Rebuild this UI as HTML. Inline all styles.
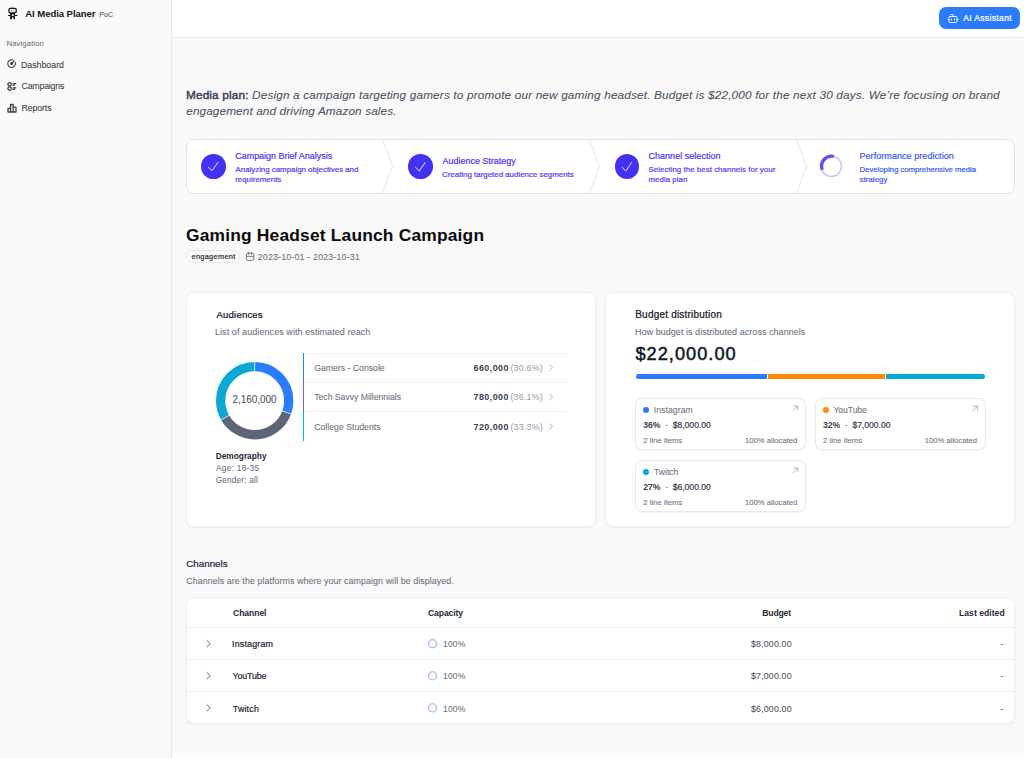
<!DOCTYPE html>
<html><head><meta charset="utf-8">
<style>
*{box-sizing:border-box;margin:0;padding:0}
html,body{width:1024px;height:758px;overflow:hidden;background:#fff;font-family:"Liberation Sans",sans-serif}
.a{position:absolute}
.t{position:absolute;white-space:nowrap;line-height:1}
svg{position:absolute;overflow:visible}
</style></head><body>
<!-- sidebar -->
<div class="a" style="left:0;top:0;width:171px;height:758px;background:#fafafa"></div>
<div class="a" style="left:171px;top:0;width:1px;height:758px;background:#e8e8ea"></div>
<!-- header -->
<div class="a" style="left:172px;top:0;width:852px;height:37px;background:#fff"></div>
<div class="a" style="left:172px;top:37px;width:852px;height:1px;background:#e8e9ec"></div>
<!-- main -->
<div class="a" style="left:172px;top:38px;width:852px;height:715px;background:#f9f9fa"></div>

<!-- logo robot -->
<svg style="left:0;top:0" width="24" height="24" viewBox="0 0 24 24">
  <path d="M11.9 8.3 L12.5 6.9 L13.1 8.3z" fill="#171717"/>
  <rect x="8.95" y="8.4" width="7.3" height="4.5" rx="1.3" fill="#ececec" stroke="#171717" stroke-width="1.25"/>
  <rect x="11.2" y="9.9" width="0.6" height="1.5" fill="#666"/>
  <rect x="13.6" y="9.9" width="0.6" height="1.5" fill="#888"/>
  <rect x="7.9" y="15.0" width="9.7" height="1.0" rx="0.5" fill="#171717"/>
  <path d="M10.1 13.1 H15.0 V19.2 H13.6 V17.6 H12.0 V19.2 H10.1z" fill="#171717"/>
  <circle cx="12.75" cy="15.15" r="1.0" fill="#fafafa"/>
</svg>
<!-- nav icons -->
<svg style="left:6.6px;top:59.4px" width="9.2" height="9.2" viewBox="0 0 24 24" fill="none" stroke="#404040" stroke-width="2.9" stroke-linecap="round" stroke-linejoin="round">
  <path d="M15.6 2.7a10 10 0 1 0 5.7 5.7"/><circle cx="12" cy="12" r="2.5" fill="#404040"/><path d="M13.4 10.6 19 5"/>
</svg>
<svg style="left:6.5px;top:81.5px" width="10" height="9" viewBox="0 0 10 9" fill="none" stroke="#404040" stroke-width="1.3">
  <circle cx="2.6" cy="2.3" r="1.7"/><circle cx="2.6" cy="6.6" r="1.7"/>
  <path d="M5.6 1.6h3.6M5.6 3.2h2.4M5.6 5.8h3.6M5.6 7.4h2.4"/>
</svg>
<svg style="left:6.5px;top:103px" width="10" height="10" viewBox="0 0 10 10" fill="none" stroke="#404040" stroke-width="1.3" stroke-linejoin="round">
  <path d="M1 9V5.5h2.6V9zM3.6 9V1.5h2.6V9zM6.2 9V4.2h2.8V9z"/>
</svg>

<!-- AI assistant button -->
<div class="a" style="left:939px;top:7px;width:81px;height:22px;border-radius:7px;background:#2b7bfe"></div>
<svg style="left:946.5px;top:12.5px" width="12" height="11" viewBox="0 0 24 22" fill="none" stroke="#fff" stroke-width="1.9" stroke-linecap="round" stroke-linejoin="round">
  <path d="M12 7V3H8"/><rect width="16" height="12" x="4" y="7" rx="2"/><path d="M2 13h2"/><path d="M20 13h2"/><path d="M15 12v2"/><path d="M9 12v2"/>
</svg>

<!-- steps box -->
<div class="a" style="left:186px;top:139px;width:829px;height:55px;border:1px solid #e3e4e8;border-radius:8px;background:#fff"></div>
<svg style="left:0;top:0" width="1024" height="758" viewBox="0 0 1024 758" fill="none" stroke="#e3e4e8" stroke-width="1">
  <path d="M382.4 139.5 L392.5 166.4 L382.4 193.5"/>
  <path d="M589.4 139.5 L599.5 166.4 L589.4 193.5"/>
  <path d="M796.4 139.5 L806.5 166.4 L796.4 193.5"/>
</svg>
<!-- step circles -->
<div class="a" style="left:201px;top:154px;width:24.6px;height:24.6px;border-radius:50%;background:#4432f4"></div>
<div class="a" style="left:408.2px;top:154.2px;width:24.6px;height:24.6px;border-radius:50%;background:#4432f4"></div>
<div class="a" style="left:614.8px;top:154.3px;width:24.6px;height:24.6px;border-radius:50%;background:#4432f4"></div>
<svg style="left:0;top:0" width="1024" height="758" fill="none" stroke="#f0eeff" stroke-width="0.95" stroke-linecap="round" stroke-linejoin="round">
  <path d="M208.3 167.1 L212.1 170.8 L218 162.2"/>
  <path d="M415.5 167.3 L419.3 171 L425.2 162.4"/>
  <path d="M622 167.3 L625.8 171 L631.7 162.4"/>
</svg>
<!-- spinner -->
<svg style="left:819.5px;top:154.6px" width="22.5" height="22.5" viewBox="0 0 22.5 22.5" fill="none">
  <circle cx="11.25" cy="11.25" r="10.2" stroke="#cbc3f8" stroke-width="1.6"/>
  <path d="M2.3 14.8 A10 10 0 0 1 13.8 1.4" stroke="#6a4cf5" stroke-width="3.4"/>
</svg>

<!-- badge -->
<div class="a" style="left:186.3px;top:249.8px;width:53.5px;height:12.8px;border:1px solid #e5e7eb;border-radius:7px;background:#fbfbfc"></div>
<!-- calendar -->
<svg style="left:0;top:0" width="300" height="300" fill="none" stroke="#6a7282" stroke-width="0.9" stroke-linecap="round">
  <rect x="246.4" y="253.3" width="7.4" height="7.1" rx="1.3"/>
  <path d="M246.4 256.4h7.4M248.6 252.2v2.2M251.6 252.2v2.2"/>
</svg>

<!-- cards -->
<div class="a" style="left:186px;top:292px;width:410px;height:235px;border:1px solid #eceef1;border-radius:8px;background:#fff;box-shadow:0 0.5px 1.5px rgba(0,0,0,0.05)"></div>
<div class="a" style="left:605px;top:292px;width:410px;height:235px;border:1px solid #eceef1;border-radius:8px;background:#fff;box-shadow:0 0.5px 1.5px rgba(0,0,0,0.05)"></div>

<!-- donut -->
<svg style="left:215.8px;top:361.8px" width="77.4" height="77.4" viewBox="0 0 100 100">
  <g transform="rotate(-90 50 50)" fill="none" stroke-width="12">
    <circle cx="50" cy="50" r="44" stroke="#2b7bfe" stroke-dasharray="84.6 1000" stroke-dashoffset="0"/>
    <circle cx="50" cy="50" r="44" stroke="#5e6577" stroke-dasharray="99.8 1000" stroke-dashoffset="-84.6"/>
    <circle cx="50" cy="50" r="44" stroke="#0aa8d2" stroke-dasharray="92.1 1000" stroke-dashoffset="-184.4"/>
  </g>
  <g stroke="#fff" stroke-width="0.9"><path d="M50.00 13.00 L50.00 -1.00"/><path d="M84.73 62.75 L97.88 67.58"/><path d="M17.92 68.43 L5.78 75.41"/></g>
</svg>
<!-- audience list -->
<div class="a" style="left:303px;top:352.5px;width:262.5px;height:1px;background:#f0f1f3"></div>
<div class="a" style="left:303px;top:381.8px;width:262.5px;height:1px;background:#f0f1f3"></div>
<div class="a" style="left:303px;top:411px;width:262.5px;height:1px;background:#f0f1f3"></div>
<div class="a" style="left:303px;top:352.5px;width:1.2px;height:29.3px;background:#2b7bfe"></div>
<div class="a" style="left:303px;top:381.8px;width:1.2px;height:29.3px;background:#7b5cf3"></div>
<div class="a" style="left:303px;top:411px;width:1.2px;height:29.8px;background:#10b2d8"></div>
<svg style="left:0;top:0" width="1024" height="758" fill="none" stroke="#99a1af" stroke-width="0.8" stroke-linecap="round" stroke-linejoin="round">
  <path d="M549.8 364.9 L552.6 367.6 L549.8 370.3"/>
  <path d="M549.8 394.3 L552.6 397 L549.8 399.7"/>
  <path d="M549.8 423.7 L552.6 426.4 L549.8 429.1"/>
</svg>

<!-- budget bar -->
<div class="a" style="left:635.6px;top:373.8px;width:131.6px;height:5.2px;border-radius:3px 0 0 3px;background:#2b7bfe"></div>
<div class="a" style="left:768.2px;top:373.8px;width:116.8px;height:5.2px;background:#ff8c00"></div>
<div class="a" style="left:886.1px;top:373.8px;width:98.9px;height:5.2px;border-radius:0 3px 3px 0;background:#08a9d4"></div>
<!-- mini cards -->
<div class="a" style="left:635px;top:398px;width:171px;height:52px;border:1px solid #e9eaee;border-radius:7px;background:#fff;box-shadow:0 0.5px 1px rgba(0,0,0,0.04)"></div>
<div class="a" style="left:815px;top:398px;width:171px;height:52px;border:1px solid #e9eaee;border-radius:7px;background:#fff;box-shadow:0 0.5px 1px rgba(0,0,0,0.04)"></div>
<div class="a" style="left:635px;top:460px;width:171px;height:52px;border:1px solid #e9eaee;border-radius:7px;background:#fff;box-shadow:0 0.5px 1px rgba(0,0,0,0.04)"></div>
<div class="a" style="left:643px;top:406.6px;width:6.2px;height:6.2px;border-radius:50%;background:#2b7bfe"></div>
<div class="a" style="left:822.7px;top:406.8px;width:6.2px;height:6.2px;border-radius:50%;background:#ff8c00"></div>
<div class="a" style="left:643px;top:468.6px;width:6.2px;height:6.2px;border-radius:50%;background:#08a9d4"></div>
<svg style="left:0;top:0" width="1024" height="758" fill="none" stroke="#99a1af" stroke-width="0.8" stroke-linecap="round" stroke-linejoin="round">
  <path d="M792.8 411 L797.7 406.1 M793.6 406.1 H797.7 V410.2"/>
  <path d="M972.5 411 L977.4 406.1 M973.3 406.1 H977.4 V410.2"/>
  <path d="M792.8 472.8 L797.7 467.9 M793.6 467.9 H797.7 V472"/>
</svg>

<!-- channels table -->
<div class="a" style="left:186px;top:597px;width:829px;height:127px;border:1px solid #eceef1;border-radius:8px;background:#fff;box-shadow:0 1px 1.5px rgba(0,0,0,0.06)"></div>
<div class="a" style="left:187px;top:627px;width:827px;height:1px;background:#eceef1"></div>
<div class="a" style="left:187px;top:659px;width:827px;height:1px;background:#eceef1"></div>
<div class="a" style="left:187px;top:691px;width:827px;height:1px;background:#eceef1"></div>
<svg style="left:0;top:0" width="1024" height="758" fill="none" stroke="#4a5565" stroke-width="0.85" stroke-linecap="round" stroke-linejoin="round">
  <path d="M206.9 640.4 L210.2 643.6 L206.9 646.8"/>
  <path d="M206.9 672.5 L210.2 675.7 L206.9 678.9"/>
  <path d="M206.9 704.6 L210.2 707.8 L206.9 711"/>
</svg>
<svg style="left:0;top:0" width="1024" height="758" fill="none" stroke="#b0cbfb" stroke-width="1.6">
  <circle cx="432.6" cy="643.6" r="4"/>
  <circle cx="432.6" cy="675.7" r="4"/>
  <circle cx="432.6" cy="707.8" r="4"/>
</svg>

<div class="t" style="left:25.23px;top:9.01px;font-size:9.60px;color:#171717;font-weight:bold;letter-spacing:-0.084px;">AI Media Planer</div>
<div class="t" style="left:99.24px;top:10.60px;font-size:7.00px;color:#525252;-webkit-text-stroke:0.08px #525252;letter-spacing:0.150px;">PoC</div>
<div class="t" style="left:6.48px;top:39.60px;font-size:7.70px;color:#737373;-webkit-text-stroke:0.08px #737373;letter-spacing:0.122px;">Navigation</div>
<div class="t" style="left:20.96px;top:60.70px;font-size:8.80px;color:#404040;-webkit-text-stroke:0.08px #404040;letter-spacing:-0.004px;">Dashboard</div>
<div class="t" style="left:21.47px;top:82.30px;font-size:8.80px;color:#404040;-webkit-text-stroke:0.08px #404040;letter-spacing:-0.196px;">Campaigns</div>
<div class="t" style="left:21.47px;top:104.41px;font-size:8.80px;color:#404040;-webkit-text-stroke:0.08px #404040;letter-spacing:-0.117px;">Reports</div>
<div class="t" style="left:963.20px;top:14.10px;font-size:8.50px;color:#ffffff;-webkit-text-stroke:0.22px #ffffff;letter-spacing:0.363px;">AI Assistant</div>
<div class="t" style="left:185.94px;top:90.01px;font-size:11.80px;color:#4a5565;-webkit-text-stroke:0.08px #4a5565;font-style:italic;letter-spacing:0.151px;"><span style="font-style:normal;-webkit-text-stroke:0.45px #364153;color:#364153">Media plan:</span> Design a campaign targeting gamers to promote our new gaming headset. Budget is $22,000 for the next 30 days. We’re focusing on brand</div>
<div class="t" style="left:186.24px;top:106.21px;font-size:11.80px;color:#4a5565;-webkit-text-stroke:0.08px #4a5565;font-style:italic;letter-spacing:0.098px;">engagement and driving Amazon sales.</div>
<div class="t" style="left:235.22px;top:152.40px;font-size:9.00px;color:#5038ee;-webkit-text-stroke:0.22px #5038ee;letter-spacing:-0.029px;">Campaign Brief Analysis</div>
<div class="t" style="left:235.52px;top:165.91px;font-size:7.90px;color:#5a43ee;-webkit-text-stroke:0.22px #5a43ee;letter-spacing:-0.012px;">Analyzing campaign objectives and</div>
<div class="t" style="left:235.22px;top:175.61px;font-size:7.90px;color:#5a43ee;-webkit-text-stroke:0.22px #5a43ee;">requirements</div>
<div class="t" style="left:442.52px;top:157.20px;font-size:9.00px;color:#5038ee;-webkit-text-stroke:0.22px #5038ee;letter-spacing:-0.020px;">Audience Strategy</div>
<div class="t" style="left:442.02px;top:170.71px;font-size:7.90px;color:#5a43ee;-webkit-text-stroke:0.22px #5a43ee;letter-spacing:0.003px;">Creating targeted audience segments</div>
<div class="t" style="left:648.48px;top:152.40px;font-size:9.00px;color:#5038ee;-webkit-text-stroke:0.22px #5038ee;letter-spacing:0.032px;">Channel selection</div>
<div class="t" style="left:648.48px;top:165.91px;font-size:7.90px;color:#5a43ee;-webkit-text-stroke:0.22px #5a43ee;letter-spacing:0.039px;">Selecting the best channels for your</div>
<div class="t" style="left:648.48px;top:175.61px;font-size:7.90px;color:#5a43ee;-webkit-text-stroke:0.22px #5a43ee;letter-spacing:0.029px;">media plan</div>
<div class="t" style="left:859.47px;top:152.40px;font-size:9.00px;color:#3d5ef0;-webkit-text-stroke:0.22px #3d5ef0;letter-spacing:0.062px;">Performance prediction</div>
<div class="t" style="left:859.47px;top:165.91px;font-size:7.90px;color:#4362ee;-webkit-text-stroke:0.22px #4362ee;letter-spacing:-0.076px;">Developing comprehensive media</div>
<div class="t" style="left:859.47px;top:175.61px;font-size:7.90px;color:#4362ee;-webkit-text-stroke:0.22px #4362ee;letter-spacing:-0.026px;">strategy</div>
<div class="t" style="left:185.96px;top:227.00px;font-size:17.40px;color:#0a0a0a;font-weight:bold;letter-spacing:0.181px;">Gaming Headset Launch Campaign</div>
<div class="t" style="left:191.47px;top:253.41px;font-size:7.40px;color:#303030;-webkit-text-stroke:0.22px #303030;letter-spacing:0.301px;">engagement</div>
<div class="t" style="left:257.71px;top:252.81px;font-size:8.80px;color:#6a7282;-webkit-text-stroke:0.08px #6a7282;letter-spacing:0.194px;">2023-10-01 - 2023-10-31</div>
<div class="t" style="left:216.51px;top:309.82px;font-size:9.60px;color:#101828;-webkit-text-stroke:0.22px #101828;letter-spacing:0.171px;">Audiences</div>
<div class="t" style="left:214.97px;top:327.81px;font-size:9.00px;color:#6a7282;-webkit-text-stroke:0.08px #6a7282;letter-spacing:0.075px;">List of audiences with estimated reach</div>
<div class="t" style="left:232.47px;top:395.41px;font-size:10.00px;color:#4a5565;-webkit-text-stroke:0.08px #4a5565;letter-spacing:-0.036px;">2,160,000</div>
<div class="t" style="left:215.71px;top:451.70px;font-size:8.30px;color:#1e2939;font-weight:bold;letter-spacing:0.011px;">Demography</div>
<div class="t" style="left:216.01px;top:463.60px;font-size:8.30px;color:#6a7282;-webkit-text-stroke:0.08px #6a7282;letter-spacing:0.289px;">Age: 18-35</div>
<div class="t" style="left:215.71px;top:475.51px;font-size:8.30px;color:#6a7282;-webkit-text-stroke:0.08px #6a7282;letter-spacing:0.150px;">Gender: all</div>
<div class="t" style="left:314.23px;top:363.81px;font-size:8.70px;color:#6a7282;-webkit-text-stroke:0.08px #6a7282;letter-spacing:-0.004px;">Gamers - Console</div>
<div class="t" style="left:473.48px;top:363.82px;font-size:8.90px;color:#364153;font-weight:bold;letter-spacing:0.482px;">660,000</div>
<div class="t" style="left:510.48px;top:363.82px;font-size:8.90px;color:#99a1af;-webkit-text-stroke:0.08px #99a1af;letter-spacing:0.200px;">(30.6%)</div>
<div class="t" style="left:314.23px;top:393.40px;font-size:8.70px;color:#6a7282;-webkit-text-stroke:0.08px #6a7282;letter-spacing:-0.029px;">Tech Savvy Millennials</div>
<div class="t" style="left:473.48px;top:393.41px;font-size:8.90px;color:#364153;font-weight:bold;letter-spacing:0.482px;">780,000</div>
<div class="t" style="left:510.48px;top:393.41px;font-size:8.90px;color:#99a1af;-webkit-text-stroke:0.08px #99a1af;letter-spacing:0.200px;">(36.1%)</div>
<div class="t" style="left:314.23px;top:423.01px;font-size:8.70px;color:#6a7282;-webkit-text-stroke:0.08px #6a7282;letter-spacing:0.013px;">College Students</div>
<div class="t" style="left:473.48px;top:423.00px;font-size:8.90px;color:#364153;font-weight:bold;letter-spacing:0.482px;">720,000</div>
<div class="t" style="left:510.48px;top:423.00px;font-size:8.90px;color:#99a1af;-webkit-text-stroke:0.08px #99a1af;letter-spacing:0.200px;">(33.3%)</div>
<div class="t" style="left:635.25px;top:310.00px;font-size:10.00px;color:#101828;-webkit-text-stroke:0.22px #101828;letter-spacing:0.205px;">Budget distribution</div>
<div class="t" style="left:634.95px;top:327.60px;font-size:9.00px;color:#6a7282;-webkit-text-stroke:0.08px #6a7282;letter-spacing:0.046px;">How budget is distributed across channels</div>
<div class="t" style="left:635.46px;top:345.00px;font-size:18.20px;color:#101828;-webkit-text-stroke:0.08px #101828;letter-spacing:1.024px;-webkit-text-stroke:0.5px #101828;">$22,000.00</div>
<div class="t" style="left:653.71px;top:406.41px;font-size:8.60px;color:#6a7282;-webkit-text-stroke:0.08px #6a7282;letter-spacing:0.104px;">Instagram</div>
<div class="t" style="left:643.24px;top:421.11px;font-size:8.60px;color:#364153;-webkit-text-stroke:0.22px #364153;letter-spacing:-0.018px;"><b style="-webkit-text-stroke:0">36%</b>&nbsp; · &nbsp;$8,000.00</div>
<div class="t" style="left:643.24px;top:436.81px;font-size:7.60px;color:#6a7282;-webkit-text-stroke:0.08px #6a7282;letter-spacing:0.057px;">2 line items</div>
<div class="t" style="left:744.94px;top:436.81px;font-size:7.60px;color:#6a7282;-webkit-text-stroke:0.08px #6a7282;letter-spacing:0.034px;">100% allocated</div>
<div class="t" style="left:833.48px;top:406.41px;font-size:8.60px;color:#6a7282;-webkit-text-stroke:0.08px #6a7282;letter-spacing:-0.066px;">YouTube</div>
<div class="t" style="left:823.01px;top:421.11px;font-size:8.60px;color:#364153;-webkit-text-stroke:0.22px #364153;letter-spacing:-0.021px;"><b style="-webkit-text-stroke:0">32%</b>&nbsp; · &nbsp;$7,000.00</div>
<div class="t" style="left:823.01px;top:436.81px;font-size:7.60px;color:#6a7282;-webkit-text-stroke:0.08px #6a7282;letter-spacing:0.057px;">2 line items</div>
<div class="t" style="left:924.71px;top:436.81px;font-size:7.60px;color:#6a7282;-webkit-text-stroke:0.08px #6a7282;letter-spacing:0.033px;">100% allocated</div>
<div class="t" style="left:654.01px;top:468.30px;font-size:8.60px;color:#6a7282;-webkit-text-stroke:0.08px #6a7282;">Twitch</div>
<div class="t" style="left:643.24px;top:483.00px;font-size:8.60px;color:#364153;-webkit-text-stroke:0.22px #364153;letter-spacing:-0.018px;"><b style="-webkit-text-stroke:0">27%</b>&nbsp; · &nbsp;$6,000.00</div>
<div class="t" style="left:643.24px;top:498.71px;font-size:7.60px;color:#6a7282;-webkit-text-stroke:0.08px #6a7282;letter-spacing:0.057px;">2 line items</div>
<div class="t" style="left:744.94px;top:498.71px;font-size:7.60px;color:#6a7282;-webkit-text-stroke:0.08px #6a7282;letter-spacing:0.034px;">100% allocated</div>
<div class="t" style="left:186.25px;top:559.22px;font-size:9.80px;color:#1e2939;-webkit-text-stroke:0.22px #1e2939;">Channels</div>
<div class="t" style="left:186.25px;top:577.20px;font-size:8.90px;color:#6a7282;-webkit-text-stroke:0.08px #6a7282;letter-spacing:0.065px;">Channels are the platforms where your campaign will be displayed.</div>
<div class="t" style="left:233.01px;top:609.11px;font-size:8.60px;color:#1e2939;font-weight:bold;letter-spacing:-0.067px;">Channel</div>
<div class="t" style="left:428.00px;top:609.11px;font-size:8.60px;color:#1e2939;font-weight:bold;letter-spacing:-0.098px;">Capacity</div>
<div class="t" style="left:762.22px;top:609.11px;font-size:8.60px;color:#1e2939;font-weight:bold;letter-spacing:-0.140px;">Budget</div>
<div class="t" style="left:959.00px;top:609.11px;font-size:8.60px;color:#1e2939;font-weight:bold;letter-spacing:0.030px;">Last edited</div>
<div class="t" style="left:231.97px;top:640.31px;font-size:8.90px;color:#1e2939;-webkit-text-stroke:0.22px #1e2939;letter-spacing:0.196px;">Instagram</div>
<div class="t" style="left:442.95px;top:640.30px;font-size:8.60px;color:#6a7282;-webkit-text-stroke:0.08px #6a7282;letter-spacing:0.168px;">100%</div>
<div class="t" style="left:751.01px;top:640.30px;font-size:8.80px;color:#4a5565;-webkit-text-stroke:0.08px #4a5565;letter-spacing:0.175px;">$8,000.00</div>
<div class="t" style="left:1000.47px;top:640.30px;font-size:8.60px;color:#6a7282;-webkit-text-stroke:0.08px #6a7282;">-</div>
<div class="t" style="left:232.47px;top:672.41px;font-size:8.90px;color:#1e2939;-webkit-text-stroke:0.22px #1e2939;letter-spacing:-0.165px;">YouTube</div>
<div class="t" style="left:442.95px;top:672.41px;font-size:8.60px;color:#6a7282;-webkit-text-stroke:0.08px #6a7282;letter-spacing:0.168px;">100%</div>
<div class="t" style="left:751.01px;top:672.41px;font-size:8.80px;color:#4a5565;-webkit-text-stroke:0.08px #4a5565;letter-spacing:0.175px;">$7,000.00</div>
<div class="t" style="left:1000.47px;top:672.41px;font-size:8.60px;color:#6a7282;-webkit-text-stroke:0.08px #6a7282;">-</div>
<div class="t" style="left:232.77px;top:704.50px;font-size:8.90px;color:#1e2939;-webkit-text-stroke:0.22px #1e2939;letter-spacing:0.180px;">Twitch</div>
<div class="t" style="left:442.95px;top:704.50px;font-size:8.60px;color:#6a7282;-webkit-text-stroke:0.08px #6a7282;letter-spacing:0.168px;">100%</div>
<div class="t" style="left:751.01px;top:704.50px;font-size:8.80px;color:#4a5565;-webkit-text-stroke:0.08px #4a5565;letter-spacing:0.175px;">$6,000.00</div>
<div class="t" style="left:1000.47px;top:704.50px;font-size:8.60px;color:#6a7282;-webkit-text-stroke:0.08px #6a7282;">-</div>
</body></html>
